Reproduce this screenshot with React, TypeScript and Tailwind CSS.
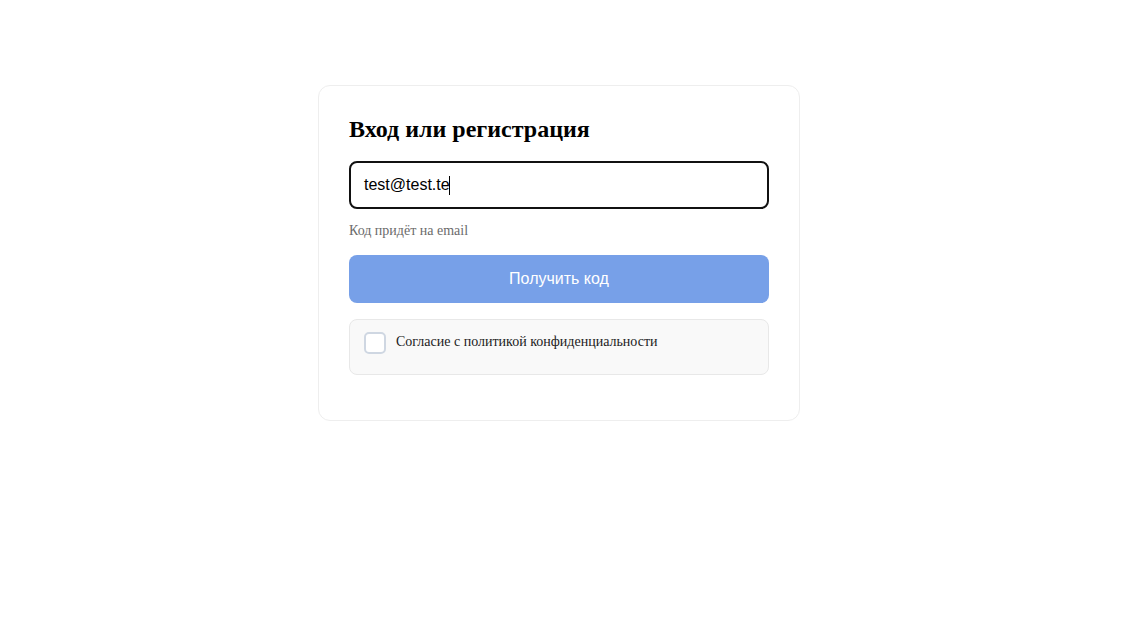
export default function App() {
  return (
    <div className="flex min-h-screen justify-center bg-white pt-[85px] pr-[23px]">
      <div className="h-fit w-[482px] rounded-[12px] border border-[#eeeeee] bg-white px-[30px] pt-[30px] pb-[45px]">
        <h2 className="font-['Liberation_Serif',serif] text-[24px] font-bold leading-[26px] text-black">
          Вход или регистрация
        </h2>
        <div className="mt-[19px] flex h-[48px] items-center rounded-[8px] border-2 border-[#111111] px-[13px]">
          <span className="font-['Liberation_Sans',Arial,sans-serif] text-[16px] text-black">test@test.te</span>
          <span className="-ml-px h-[19px] w-px bg-black" />
        </div>
        <p className="mt-[13px] font-['Liberation_Serif',serif] text-[14px] leading-[18px] text-[#6b6b6b]">
          Код придёт на email
        </p>
        <button className="mt-[15px] flex h-[48px] w-full items-center justify-center rounded-[8px] bg-[#77a0e8] font-['Liberation_Sans',Arial,sans-serif] text-[16px] text-white">
          Получить код
        </button>
        <div className="mt-[16px] flex h-[56px] items-start gap-[10px] rounded-[8px] border border-[#e8e8e8] bg-[#f9f9f9] px-[14px] pt-[12px]">
          <span className="h-[22px] w-[22px] shrink-0 rounded-[5px] border-2 border-[#cfd7e2] bg-white" />
          <span className="pt-px font-['Liberation_Serif',serif] text-[14px] leading-[18px] text-[#222222]">
            Согласие с политикой конфиденциальности
          </span>
        </div>
      </div>
    </div>
  )
}
